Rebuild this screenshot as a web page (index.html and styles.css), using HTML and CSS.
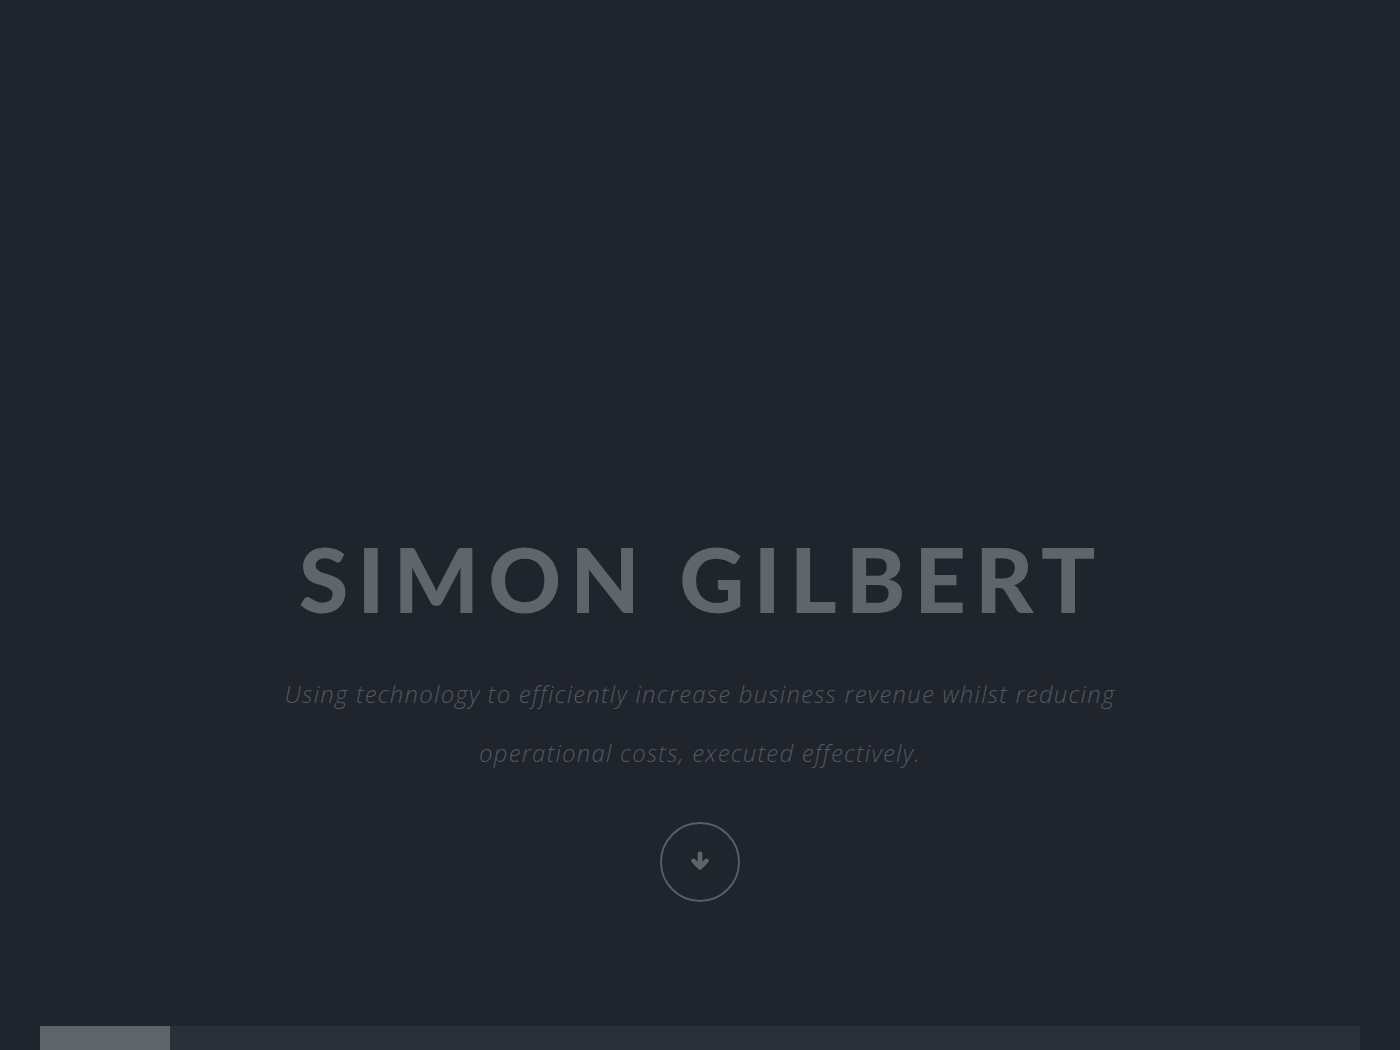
FILE: index.html
```html
<!DOCTYPE html>
<html>
<head>
<meta charset="utf-8">
<link rel="stylesheet" href="styles.css">
</head>
<body>
<section class="hero">
  <h1 class="title">SIMON GILBERT</h1>
  <p class="tagline">Using technology to efficiently increase business revenue whilst reducing operational costs, executed effectively.</p>
  <a class="down" href="#">
    <svg width="26" height="26" viewBox="0 0 24 24"><path d="M12 4.5v12M6 11l6 6 6-6" fill="none" stroke="#5f656b" stroke-width="4.4" stroke-linecap="round" stroke-linejoin="round"/></svg>
  </a>
</section>
<div class="bar"><div class="bar-fill"></div></div>
</body>
</html>
```
FILE: styles.css
```css
html, body {
  margin: 0;
  padding: 0;
  background: #1f242d;
  height: 100%;
  overflow: hidden;
}
.hero {
  height: 1026px;
  display: flex;
  flex-direction: column;
  align-items: center;
  box-sizing: border-box;
  padding-top: 528px;
}
.title {
  margin: 0;
  font-family: "Lato", sans-serif;
  font-weight: 900;
  font-size: 90px;
  line-height: 100px;
  letter-spacing: 9px;
  color: #5f656a;
  padding-left: 3px;
}
.tagline {
  margin: 36px 0 0;
  width: 900px;
  text-align: center;
  font-family: "Open Sans", sans-serif;
  font-style: italic;
  font-weight: 300;
  font-size: 24px;
  letter-spacing: 1.2px;
  word-spacing: 0;
  line-height: 59px;
  color: #52585f;
}
.down {
  margin-top: 40px;
  width: 76px;
  height: 76px;
  border: 2px solid #585e66;
  border-radius: 50%;
  display: flex;
  align-items: center;
  justify-content: center;
}
.bar {
  margin: 0 40px;
  height: 24px;
  background: #2a2f38;
}
.bar-fill {
  width: 130px;
  height: 100%;
  background: #5f6468;
}
```
